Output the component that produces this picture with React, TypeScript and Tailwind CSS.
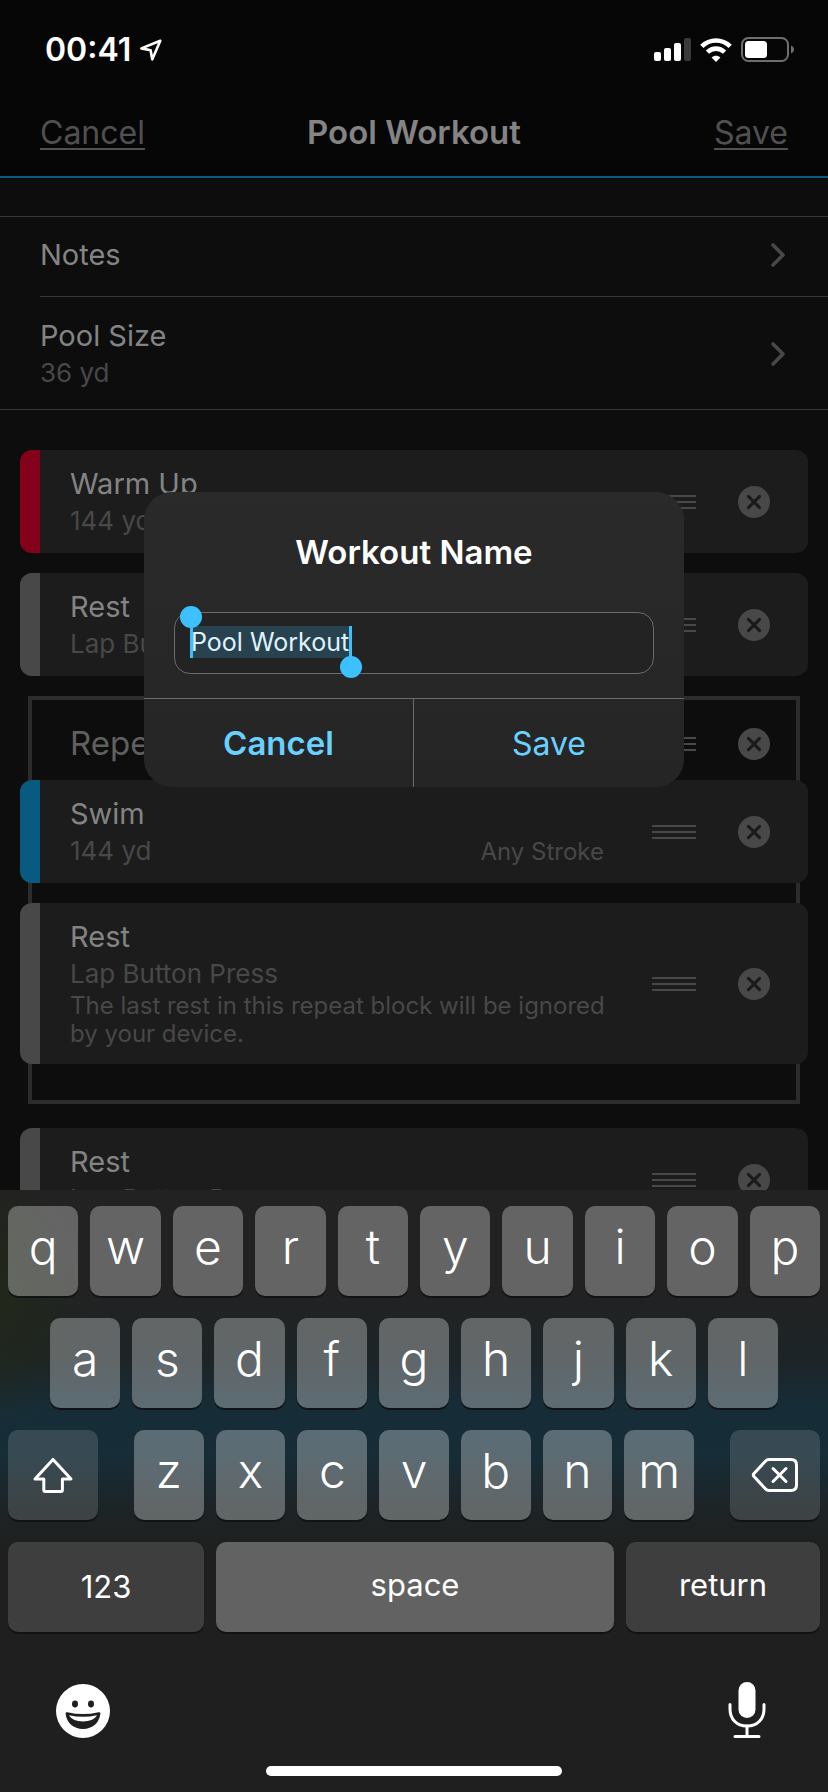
import React, { useState } from "react";
import clsx from "clsx";

type Accent = "red" | "gray" | "blue";

interface Step {
  title: string;
  detail: string;
  accent: Accent;
  stroke?: string;
  note?: string;
}

const accents: Record<Accent, string> = {
  red: "bg-[#85001b]",
  gray: "bg-[#484848]",
  blue: "bg-[#085a80]",
};

const LocationArrow = () => (
  <svg width="24" height="24" viewBox="0 0 24 24" fill="none" stroke="#fff" strokeWidth="2.6" strokeLinejoin="round">
    <path d="M21.3 2.8L2.4 10.4L11.6 12.2L13.2 21.4Z" />
  </svg>
);

const Signal = () => (
  <svg width="37" height="24" viewBox="0 0 37 24">
    <rect x="0" y="14" width="7" height="9" rx="2" fill="#fff" />
    <rect x="10" y="10" width="7" height="13" rx="2" fill="#fff" />
    <rect x="20" y="5" width="7" height="18" rx="2" fill="#fff" />
    <rect x="30" y="0" width="7" height="23" rx="2" fill="#3a3a3a" />
  </svg>
);

const Wifi = () => (
  <svg width="32" height="24" viewBox="0 0 32 24" fill="none" stroke="#fff">
    <path d="M1.8 8.4C9.8 0.6 22.2 0.6 30.2 8.4" strokeWidth="4.6" />
    <path d="M7.4 14.2C12.4 9.4 19.6 9.4 24.6 14.2" strokeWidth="4.6" />
    <path d="M16 24L11.6 19.4C14.1 17.1 17.9 17.1 20.4 19.4Z" fill="#fff" stroke="none" />
  </svg>
);

const Battery = () => (
  <svg width="54" height="26" viewBox="0 0 54 26">
    <rect x="1" y="1" width="46" height="23" rx="6.5" fill="none" stroke="#6e6e6e" strokeWidth="2" />
    <rect x="4" y="4" width="22" height="17" rx="3.5" fill="#fff" />
    <path d="M50 8.5C54 10 54 15 50 16.5Z" fill="#6e6e6e" />
  </svg>
);

const Chevron = () => (
  <svg width="16" height="26" viewBox="0 0 16 26" fill="none" stroke="#484848" strokeWidth="3.6" strokeLinecap="round" strokeLinejoin="round">
    <path d="M3 3L13 13L3 23" />
  </svg>
);

const StepActions = () => (
  <div className="flex shrink-0 items-center gap-[42px]">
    <button aria-label="Reorder step">
      <svg width="44" height="14" viewBox="0 0 44 14" fill="#484848">
        <rect y="0" width="44" height="2" />
        <rect y="6" width="44" height="2" />
        <rect y="12" width="44" height="2" />
      </svg>
    </button>
    <button aria-label="Remove step">
      <svg width="32" height="32" viewBox="0 0 32 32">
        <circle cx="16" cy="16" r="16" fill="#484848" />
        <path d="M10.4 10.4L21.6 21.6M21.6 10.4L10.4 21.6" stroke="#1a1a1a" strokeWidth="3" strokeLinecap="round" />
      </svg>
    </button>
  </div>
);

const StepCard = ({ step }: { step: Step }) => (
  <article className="flex overflow-hidden rounded-xl bg-[#1c1c1c]">
    <div className={clsx("w-5 shrink-0", accents[step.accent])} />
    <div className="flex flex-1 items-center gap-12 pr-[38px] pl-[30px]">
      <div className="flex-1 pt-[15px] pb-[14px]">
        <h3 className="text-[29px] leading-[38px] text-[#848484]">{step.title}</h3>
        <div className="flex items-baseline justify-between text-[#484848]">
          <p className="text-[26px] leading-9">{step.detail}</p>
          {step.stroke && <p className="text-[24px] leading-8">{step.stroke}</p>}
        </div>
        {step.note && <p className="-mr-4 mb-0.5 text-[24px] leading-7 text-[#484848]">{step.note}</p>}
      </div>
      <StepActions />
    </div>
  </article>
);

const SettingRow = ({ label, value }: { label: string; value?: string }) => (
  <button className={clsx("flex w-full items-center justify-between pr-[42px] text-left", value ? "pt-5 pb-[18px]" : "pt-[19px] pb-[22px]")}>
    <span>
      <span className="block text-[29px] leading-[38px] text-[#848484]">{label}</span>
      {value && <span className="block text-[26px] leading-9 text-[#484848]">{value}</span>}
    </span>
    <Chevron />
  </button>
);

const RenameDialog = ({ initialName }: { initialName: string }) => {
  const [name, setName] = useState(initialName);

  return (
    <div role="dialog" aria-labelledby="dialog-title" className="w-[540px] overflow-hidden rounded-[28px] bg-linear-to-b from-[#2a2a2a] to-[#252525]">
      <h2 id="dialog-title" className="pt-10 text-center text-[33px] leading-10 font-semibold text-white">
        <label htmlFor="workout-name">Workout Name</label>
      </h2>
      <div className="relative mx-[30px] mt-10 mb-6 h-[62px] rounded-2xl border border-[#6b6b6b] bg-[#232323]">
        {/* Selection highlight and its drag handles */}
        <div className="absolute top-[13px] left-[15px] h-8 w-[162px] border-x-3 border-[#3cc0fe] bg-[#29424f]">
          <span className="absolute -top-5 -left-[13px] size-[22px] rounded-full bg-[#3cc0fe]" />
          <span className="absolute -right-[13px] -bottom-5 size-[22px] rounded-full bg-[#3cc0fe]" />
        </div>
        <input
          id="workout-name"
          value={name}
          onChange={(e) => setName(e.target.value)}
          className="relative h-full w-full bg-transparent px-4 pb-0.5 text-[25px] text-[#dff4ff] outline-none"
        />
      </div>
      <div className="grid h-[89px] grid-cols-2 border-t border-[#6b6b6b] text-[#6ad0fe]">
        <button className="border-r border-[#6b6b6b] pt-0.5 text-[33px] font-semibold">Cancel</button>
        <button className="pt-0.5 text-[32px]">Save</button>
      </div>
    </div>
  );
};

const keyShape = "flex h-[90px] items-center justify-center rounded-[10px] text-white shadow-[0_2px_0_#101214]";

const LetterKey = ({ letter }: { letter: string }) => (
  <button className={clsx(keyShape, "min-w-0 flex-1 bg-white/30 pb-2 text-[48px] font-light")}>{letter}</button>
);

const letterKeys = (letters: string) => letters.split("").map((l) => <LetterKey key={l} letter={l} />);

const Keyboard = () => (
  <section
    aria-label="Keyboard"
    className="relative shrink-0 bg-[#1f1f1f] bg-[radial-gradient(ellipse_90px_130px_at_0_110px,#21281a,transparent),linear-gradient(180deg,#222222_0,#222222_100px,#1d2528_170px,#162d38_220px,#162d38_260px,#1d2426_320px,#1f1f1f_360px)] px-2 pt-4 pb-4"
  >
    <div className="flex flex-col gap-[22px]">
      <div className="flex gap-3">{letterKeys("qwertyuiop")}</div>
      <div className="flex gap-3 px-[42px]">{letterKeys("asdfghjkl")}</div>
      <div className="flex gap-9">
        <button aria-label="Shift" className={clsx(keyShape, "w-[90px] bg-white/14")}>
          <svg width="42" height="38" viewBox="0 0 42 38" fill="none" stroke="#fff" strokeWidth="3" strokeLinejoin="round">
            <path d="M21 3.4L39 23H30.4V34Q30.4 35.5 28.9 35.5H13.3Q11.8 35.5 11.8 34V23H3Z" />
          </svg>
        </button>
        <div className="flex flex-1 gap-3">{letterKeys("zxcvbnm")}</div>
        <button aria-label="Delete" className={clsx(keyShape, "w-[90px] bg-white/14")}>
          <svg width="48" height="36" viewBox="0 0 48 36" fill="none" stroke="#fff" strokeWidth="3" strokeLinejoin="round" strokeLinecap="round">
            <path d="M18 2.5H40Q45.5 2.5 45.5 8V28Q45.5 33.5 40 33.5H18Q16 33.5 14.6 32L3 19.6Q1.6 18 3 16.4L14.6 4Q16 2.5 18 2.5Z" />
            <path d="M22 11.5L35 24.5M35 11.5L22 24.5" />
          </svg>
        </button>
      </div>
      <div className="flex gap-3 text-[31px]">
        <button className={clsx(keyShape, "w-[196px] bg-white/14")}>123</button>
        <button className={clsx(keyShape, "flex-1 bg-white/30 pb-1")}>space</button>
        <button className={clsx(keyShape, "w-[194px] bg-white/14 pb-1")}>return</button>
      </div>
    </div>
    <div className="mt-[50px] flex items-center justify-between pr-[54px] pl-12">
      <button aria-label="Emoji">
        <svg width="54" height="54" viewBox="0 0 54 54">
          <circle cx="27" cy="27" r="27" fill="#fff" />
          <ellipse cx="19" cy="20" rx="3" ry="3.4" fill="#1f1f1f" />
          <ellipse cx="35" cy="20" rx="3" ry="3.4" fill="#1f1f1f" />
          <path d="M9.6 29.6Q9.6 27.8 11.4 28.2Q27 32 42.6 28.2Q44.4 27.8 44.4 29.6C43.6 39 36.5 45 27 45S10.4 39 9.6 29.6Z" fill="#1f1f1f" />
          <path d="M13 31.2Q27 34.4 41 31.2C38.6 35.4 33.4 37.4 27 37.4S15.4 35.4 13 31.2Z" fill="#fff" />
        </svg>
      </button>
      <button aria-label="Dictate">
        <svg width="38" height="58" viewBox="0 0 38 58" fill="none" stroke="#fff" strokeWidth="3" strokeLinecap="round">
          <rect x="10.5" y="0" width="17" height="36" rx="8.5" fill="#fff" stroke="none" />
          <path d="M2 22.5V27C2 37 8.5 44 19 44S36 37 36 27V22.5" />
          <path d="M19 44V53M7 54.5H31" />
        </svg>
      </button>
    </div>
    <div className="mx-auto mt-[26px] h-[10px] w-[296px] rounded-full bg-white" />
  </section>
);

const warmUp: Step = { title: "Warm Up", detail: "144 yd", accent: "red" };
const rest: Step = { title: "Rest", detail: "Lap Button Press", accent: "gray" };
const swim: Step = { title: "Swim", detail: "144 yd", accent: "blue", stroke: "Any Stroke" };
const lastRest: Step = { ...rest, note: "The last rest in this repeat block will be ignored by your device." };

const App: React.FC = () => {
  return (
    <div className="flex h-screen flex-col overflow-hidden bg-[#0d0d0d] font-['Inter','Liberation_Sans',sans-serif]">
      <div className="relative flex min-h-0 flex-1 flex-col overflow-hidden">
        <header className="shrink-0 border-b-2 border-[#085a80] bg-[#060606]">
          {/* Status bar */}
          <div className="flex h-[88px] items-center justify-between pt-3 pr-[33px] pl-[45px]">
            <div className="flex items-center gap-2 text-[32px] font-semibold text-white">
              00:41
              <LocationArrow />
            </div>
            <div className="flex items-center gap-[9px]">
              <Signal />
              <Wifi />
              <Battery />
            </div>
          </div>
          <nav className="grid h-[88px] grid-cols-3 items-center px-10 pt-0.5 text-[32px] text-[#505050]">
            <button className="justify-self-start underline decoration-2 underline-offset-4">Cancel</button>
            <h1 className="justify-self-center text-[33px] font-semibold whitespace-nowrap text-[#848484]">Pool Workout</h1>
            <button className="justify-self-end underline decoration-2 underline-offset-4">Save</button>
          </nav>
        </header>

        <section className="mt-[38px] shrink-0 border-y border-[#383838] pl-10">
          <div className="border-b border-[#383838]">
            <SettingRow label="Notes" />
          </div>
          <SettingRow label="Pool Size" value="36 yd" />
        </section>

        <main className="mt-10 flex shrink-0 flex-col gap-5 px-5">
          <StepCard step={warmUp} />
          <StepCard step={rest} />
          <div className="mx-2 mb-1 border-4 border-[#2c2c2c] pb-9">
            <div className="flex h-20 items-center justify-between pt-2 pr-[26px] pl-[38px]">
              <h3 className="text-[33px] text-[#606060]">Repeat</h3>
              <StepActions />
            </div>
            <div className="-mx-3 flex flex-col gap-5">
              <StepCard step={swim} />
              <StepCard step={lastRest} />
            </div>
          </div>
          <StepCard step={rest} />
        </main>

        {/* Dialog is centred in the space between status bar and keyboard */}
        <div className="absolute inset-0 flex items-center justify-center pt-[88px]">
          <RenameDialog initialName="Pool Workout" />
        </div>
      </div>
      <Keyboard />
    </div>
  );
};

export default App;
